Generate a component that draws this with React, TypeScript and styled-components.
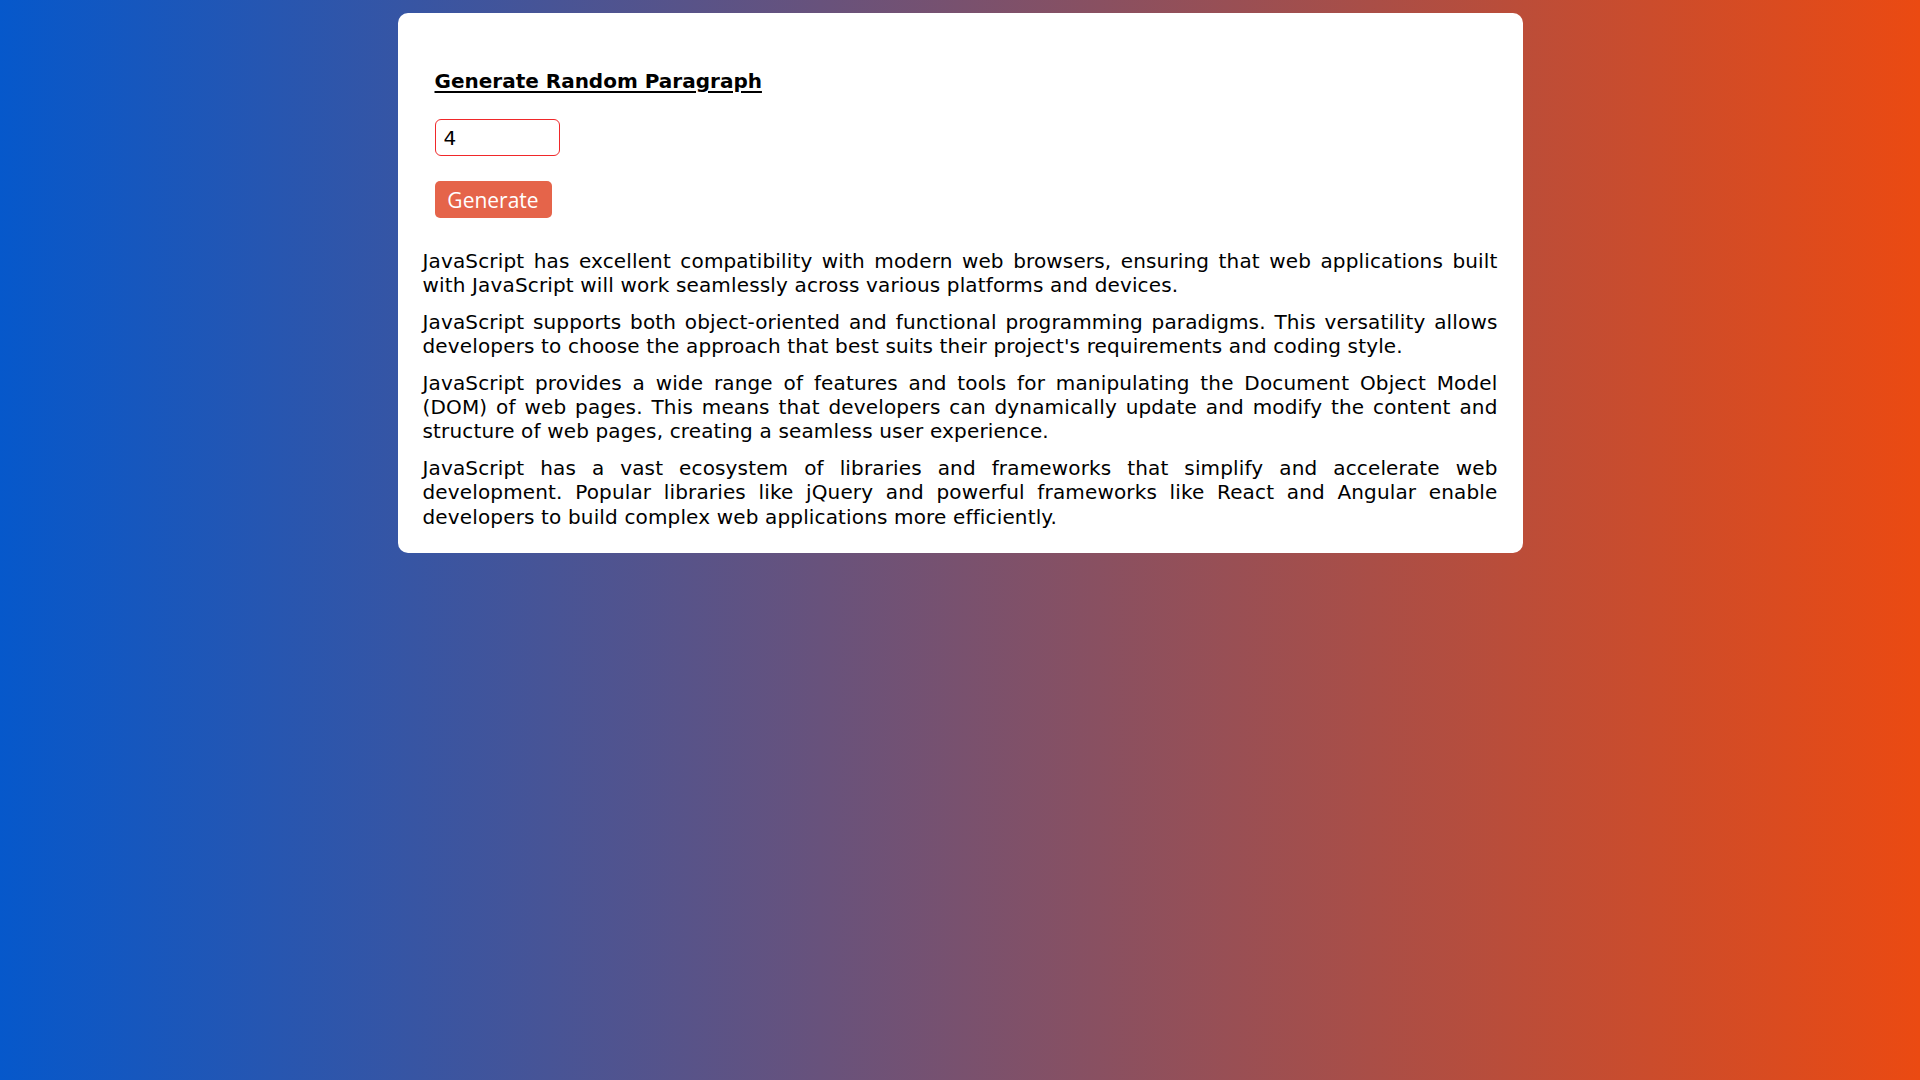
import React, { useState } from "react";
import styled, { createGlobalStyle } from "styled-components";

const GlobalStyle = createGlobalStyle`
  html, body {
    margin: 0;
    padding: 0;
  }
  body {
    min-height: 1080px;
    background: linear-gradient(to right, #0658cb 0%, #eb4a12 100%);
    font-family: "DejaVu Sans", Verdana, sans-serif;
  }
`;

const Page = styled.div`
  display: flex;
  justify-content: center;
  padding-top: 13px;
`;

const Card = styled.main`
  width: 1125px;
  box-sizing: border-box;
  background: #ffffff;
  border-radius: 10px;
  padding: 56px 25px 24px;
`;

const Form = styled.section`
  display: flex;
  flex-direction: column;
  align-items: flex-start;
  padding: 0 12px;
  margin-bottom: 31px;
`;

const Title = styled.h1`
  margin: 0 0 26px;
  font-family: "DejaVu Sans", Verdana, sans-serif;
  font-size: 20px;
  line-height: 24px;
  font-weight: 700;
  text-decoration: underline;
  text-underline-offset: 3px;
  color: #000;
`;

const CountInput = styled.input`
  width: 125px;
  height: 37px;
  box-sizing: border-box;
  border: 1px solid #f0282a;
  border-radius: 6px;
  padding: 0 8px;
  font-family: "DejaVu Sans", Verdana, sans-serif;
  font-size: 20px;
  color: #000;
  outline: none;
  margin: 0 0 25px;
`;

const Button = styled.button`
  height: 37px;
  width: 117px;
  border: none;
  border-radius: 5px;
  background: #e5644a;
  color: #ffffff;
  font-family: "Open Sans", sans-serif;
  font-size: 21px;
  cursor: pointer;
  padding: 0;
`;

const Paragraph = styled.p`
  margin: 0 0 12px;
  font-family: "DejaVu Sans", Verdana, sans-serif;
  font-size: 20px;
  line-height: 24.4px;
  letter-spacing: 0.15px;
  text-align: justify;
  color: #000;
  &:last-child {
    margin-bottom: 0;
  }
`;

const paragraphs = [
  "JavaScript has excellent compatibility with modern web browsers, ensuring that web applications built with JavaScript will work seamlessly across various platforms and devices.",
  "JavaScript supports both object-oriented and functional programming paradigms. This versatility allows developers to choose the approach that best suits their project's requirements and coding style.",
  "JavaScript provides a wide range of features and tools for manipulating the Document Object Model (DOM) of web pages. This means that developers can dynamically update and modify the content and structure of web pages, creating a seamless user experience.",
  "JavaScript has a vast ecosystem of libraries and frameworks that simplify and accelerate web development. Popular libraries like jQuery and powerful frameworks like React and Angular enable developers to build complex web applications more efficiently.",
];

export default function App() {
  const [count, setCount] = useState("4");
  return (
    <>
      <GlobalStyle />
      <Page>
        <Card>
          <Form>
            <Title>Generate Random Paragraph</Title>
            <CountInput
              type="text"
              value={count}
              onChange={(e) => setCount(e.target.value)}
            />
            <Button>Generate</Button>
          </Form>
          {paragraphs.map((p, i) => (
            <Paragraph key={i}>{p}</Paragraph>
          ))}
        </Card>
      </Page>
    </>
  );
}
